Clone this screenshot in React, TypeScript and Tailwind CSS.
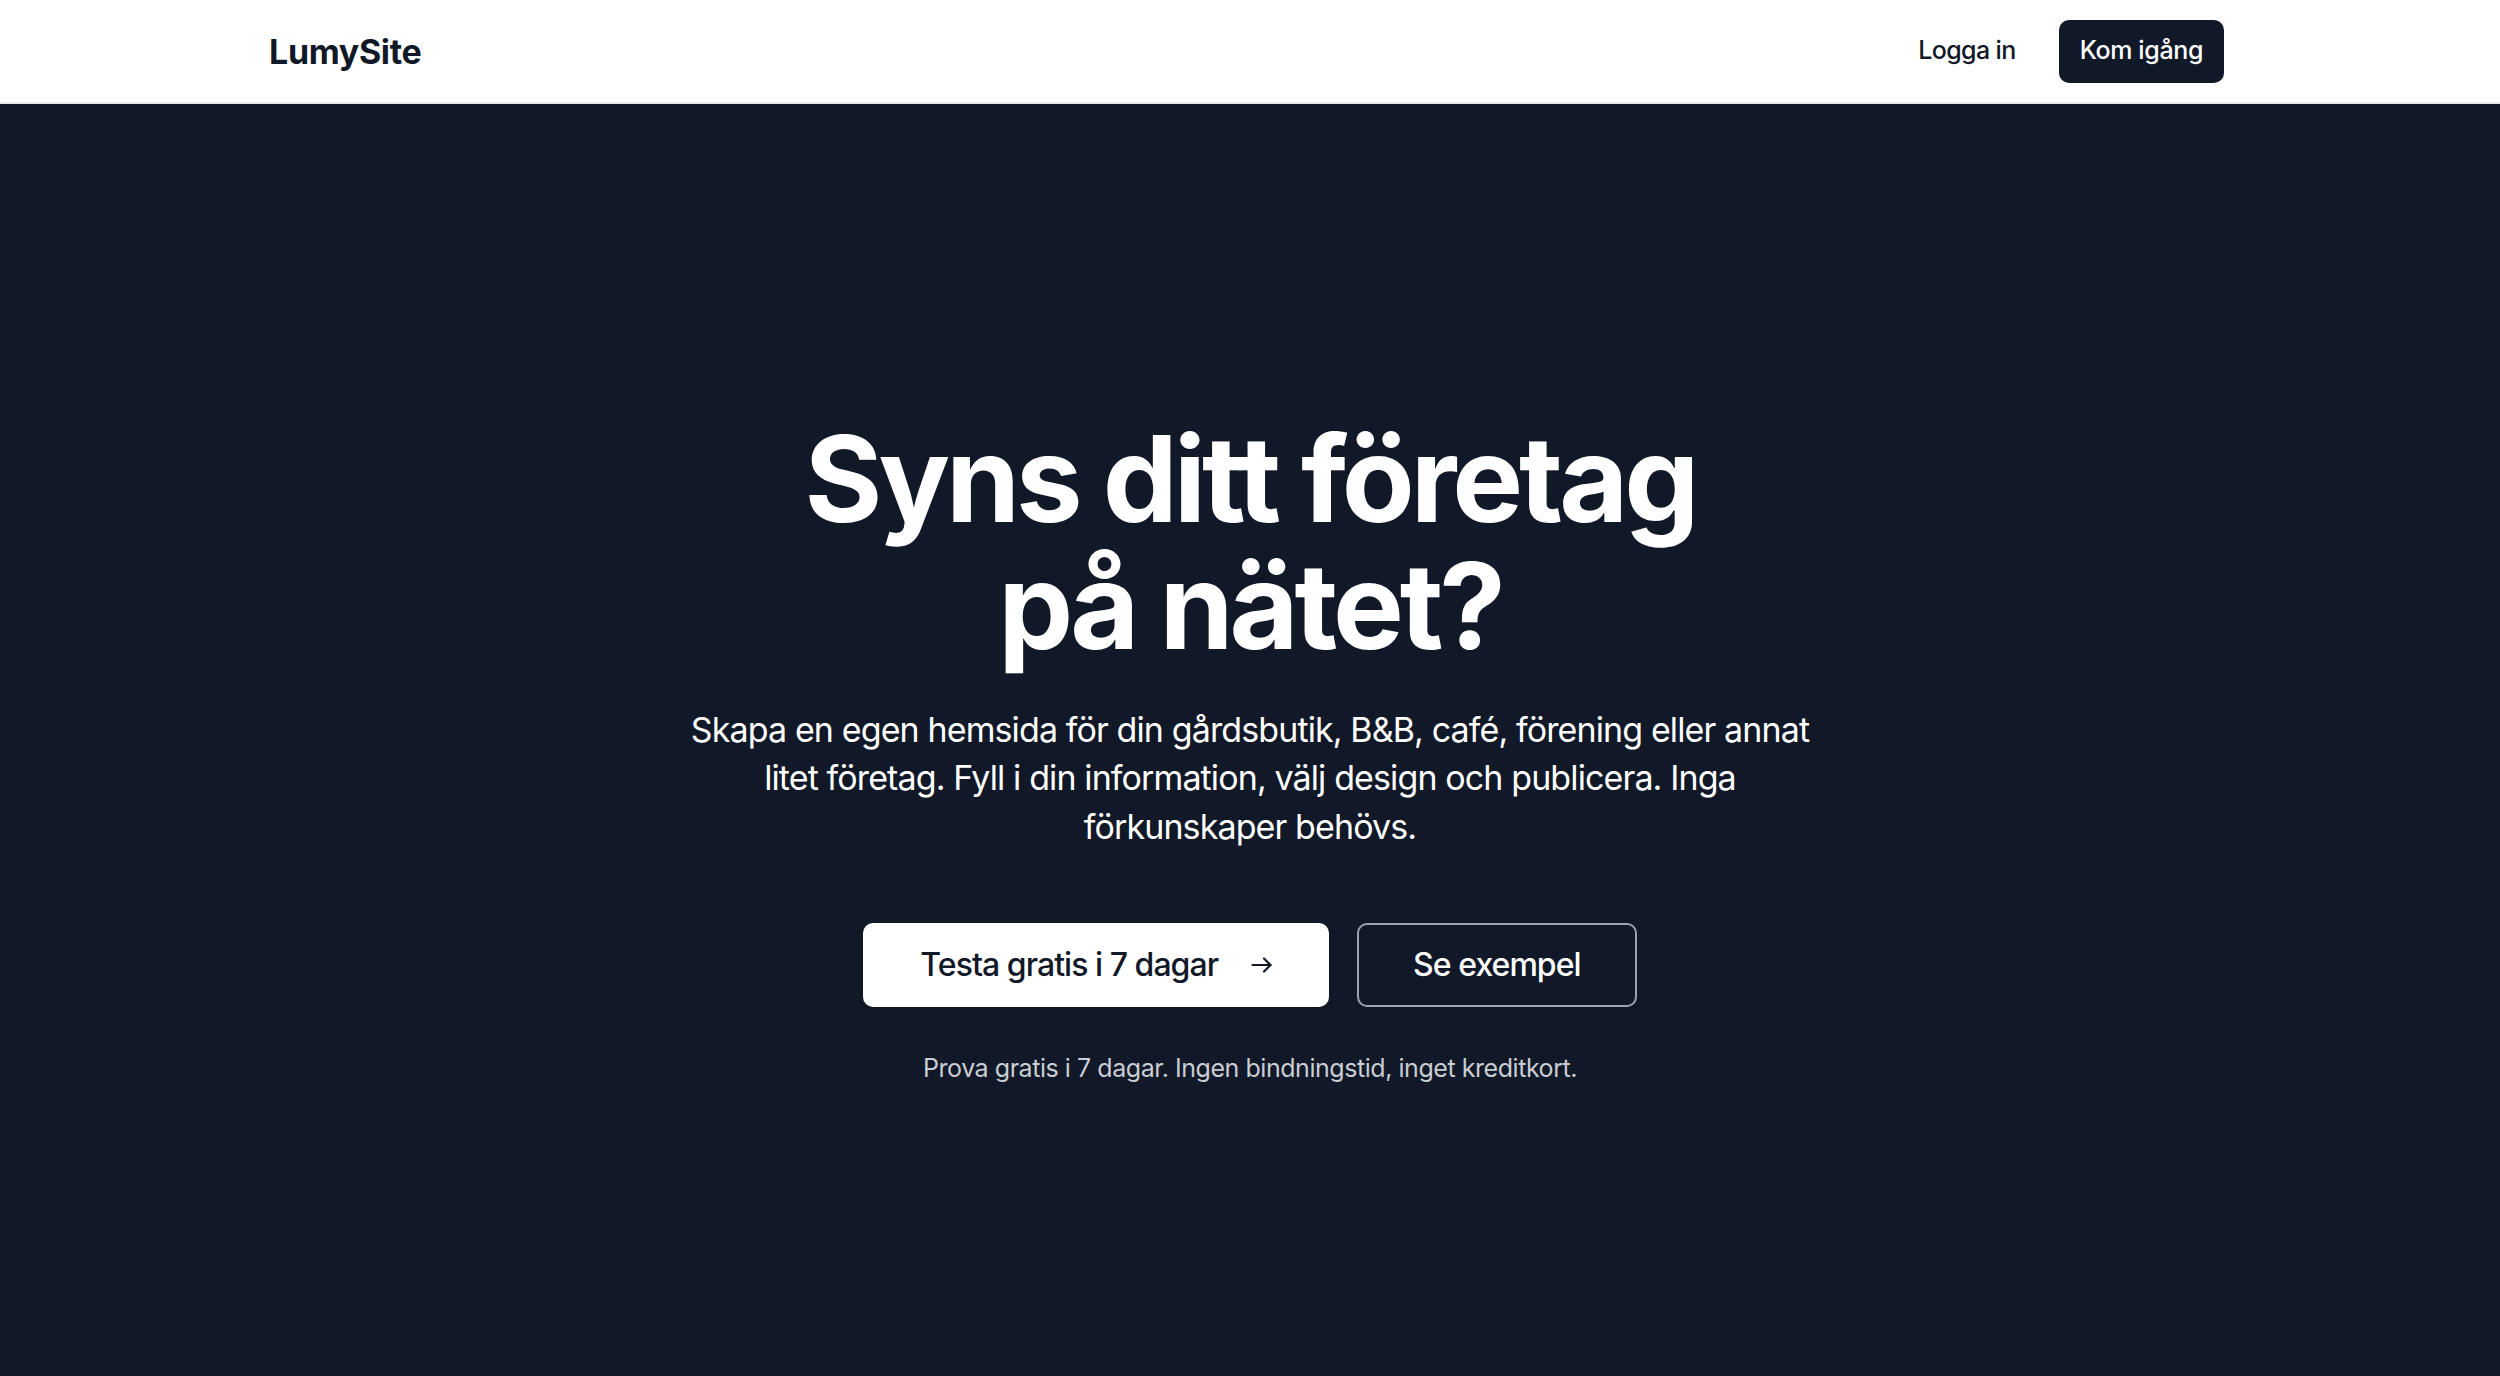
import React from "react";

function ArrowRight() {
  return (
    <svg width="21" height="16" viewBox="0 0 21 16" fill="none" stroke="currentColor" strokeWidth="2.2" strokeLinecap="round" strokeLinejoin="round">
      <path d="M1.5 8h18" />
      <path d="M13 1.5 19.5 8 13 14.5" />
    </svg>
  );
}

function Header() {
  return (
    <header className="bg-white border-b-2 border-gray-200 h-[104px] shrink-0">
      <div className="mx-auto max-w-[2048px] h-full pl-[43px] pr-[50px] flex items-center justify-between">
        <a className="text-[34px] font-bold tracking-[-0.01em] text-[#111827]">LumySite</a>
        <nav className="flex items-center gap-[22px]">
          <button className="px-[21px] h-[63px] text-[25px] font-medium tracking-[-0.025em] text-[#111827]">Logga in</button>
          <button className="px-[21px] h-[63px] rounded-[10px] bg-[#111827] text-white text-[25px] font-medium tracking-[-0.015em]">
            Kom igång
          </button>
        </nav>
      </div>
    </header>
  );
}

function Hero() {
  return (
    <section className="flex-1 bg-[#111827] pt-[312px] pb-[200px]">
      <div className="mx-auto max-w-[2048px] px-[48px] flex flex-col items-center text-center">
        <h1 className="text-[119px] leading-[127px] font-bold tracking-[-0.034em] text-white">
          Syns ditt företag
          <br />
          på nätet?
        </h1>
        <p className="mt-[36px] max-w-[1140px] text-[34px] leading-[48.4px] tracking-[-0.026em] text-white">
          Skapa en egen hemsida för din gårdsbutik, B&amp;B, café, förening eller annat litet företag. Fyll i din
          information, välj design och publicera. Inga förkunskaper behövs.
        </p>
        <div className="mt-[72px] flex items-center justify-center gap-[28px]">
          <button className="h-[84px] px-[57px] rounded-[10px] bg-white text-[#111827] text-[32px] font-medium tracking-[-0.03em] flex items-center gap-[33px] shadow-sm">
            Testa gratis i 7 dagar
            <ArrowRight />
          </button>
          <button className="h-[84px] px-[54px] rounded-[10px] border-2 border-[#9ca3af] text-white text-[32px] font-medium tracking-[-0.03em]">
            Se exempel
          </button>
        </div>
        <p className="mt-[42px] text-[25px] leading-[38px] tracking-[-0.018em] text-[#c9cdd4]">
          Prova gratis i 7 dagar. Ingen bindningstid, inget kreditkort.
        </p>
      </div>
    </section>
  );
}

export default function App() {
  return (
    <div className="min-h-screen flex flex-col font-['Inter',sans-serif] antialiased">
      <Header />
      <Hero />
    </div>
  );
}
